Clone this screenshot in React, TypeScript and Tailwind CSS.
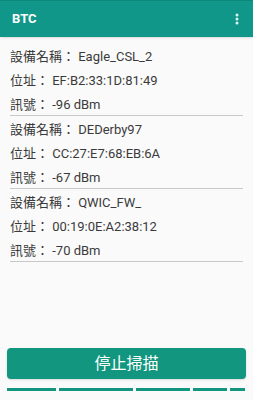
import React from 'react';

interface Device {
  name: string;
  address: string;
  rssi: number;
}

const devices: Device[] = [
  { name: 'Eagle_CSL_2', address: 'EF:B2:33:1D:81:49', rssi: -96 },
  { name: 'DEDerby97', address: 'CC:27:E7:68:EB:6A', rssi: -67 },
  { name: 'QWIC_FW_', address: '00:19:0E:A2:38:12', rssi: -70 },
];

const font = { fontFamily: 'Roboto, "Noto Sans CJK TC", sans-serif' };

const App: React.FC = () => {
  return (
    <div className="w-[253px] h-[400px] bg-[#fafafa] flex flex-col overflow-hidden" style={font}>
      <div className="h-[37px] bg-[#11978a] border-t border-[#0e8679] flex items-center justify-between pl-3 pr-[14px] shadow-sm">
        <span className="text-white font-bold text-[13px]">BTC</span>
        <svg width="4" height="12" viewBox="0 0 4 12" className="text-[#d8f3ef]">
          <circle cx="2" cy="2" r="1.5" fill="currentColor" />
          <circle cx="2" cy="6" r="1.5" fill="currentColor" />
          <circle cx="2" cy="10" r="1.5" fill="currentColor" />
        </svg>
      </div>

      <div className="pt-[6px] flex-1">
        {devices.map((d) => (
          <div key={d.address} className="mx-[10px] h-[73px] pt-[5px] border-b border-[#c8c8c8] flex flex-col gap-[6px] text-[13px] text-[#3a3a3a] leading-[18px]">
            <p>設備名稱： {d.name}</p>
            <p>位址： {d.address}</p>
            <p>訊號： {d.rssi} dBm</p>
          </div>
        ))}
      </div>

      <div className="px-[7px]">
        <button className="w-full h-[31px] rounded bg-[#13967f] text-white text-[16px] shadow">
          停止掃描
        </button>
      </div>
      <div className="flex gap-[3px] px-[7px] mt-[9px] mb-[9px]">
        <div className="h-[3px] w-[49px] bg-[#13967f]" />
        <div className="h-[3px] w-[74px] bg-[#13967f]" />
        <div className="h-[3px] w-[54px] bg-[#13967f]" />
        <div className="h-[3px] w-[34px] bg-[#13967f]" />
        <div className="h-[3px] w-[15px] bg-[#13967f]" />
      </div>
    </div>
  );
};

export default App;
